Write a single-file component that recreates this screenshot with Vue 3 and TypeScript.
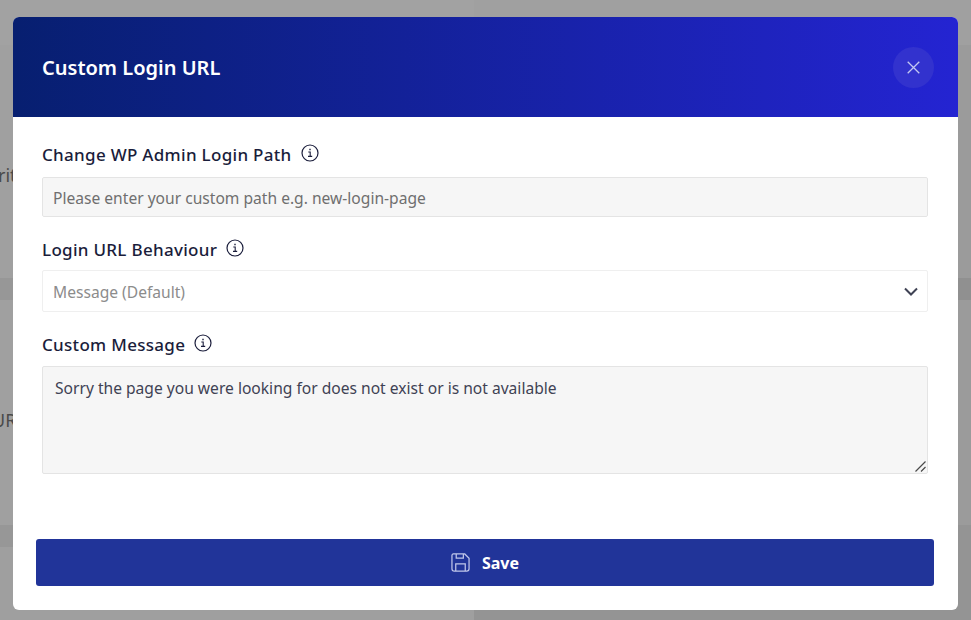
<script setup lang="ts">
const fields = {
  path: 'Change WP Admin Login Path',
  behaviour: 'Login URL Behaviour',
  message: 'Custom Message',
}
</script>

<template>
  <div class="page">
    <div class="backdrop">
      <div class="side side-left">
        <div class="band band-top"></div>
        <div class="band band-card"><span class="peek peek-one">rit</span></div>
        <div class="band band-bar"></div>
        <div class="band band-card-two"><span class="peek peek-two">UR</span></div>
        <div class="band band-bar"></div>
        <div class="band band-rest"></div>
      </div>
      <div class="side side-right">
        <div class="band band-top"></div>
        <div class="band band-card"></div>
        <div class="band band-bar"></div>
        <div class="band band-card-two"></div>
        <div class="band band-rest"></div>
      </div>
    </div>
    <div class="modal">
      <header class="modal-head">
        <h2>Custom Login URL</h2>
        <button class="close" type="button" aria-label="Close">
          <svg width="13" height="13" viewBox="0 0 13 13" fill="none" stroke="currentColor" stroke-width="1.3">
            <path d="M.7.7l11.6 11.6M12.3.7L.7 12.3" />
          </svg>
        </button>
      </header>
      <div class="modal-body">
        <div class="field field-first">
          <label>
            {{ fields.path }}
            <svg class="info" width="18" height="18" viewBox="0 0 18 18" fill="none" stroke="currentColor">
              <circle cx="9" cy="9" r="8" stroke-width="1.2" />
              <path d="M7.3 8h1.9v4.3M7 12.4h4.2" stroke-width="1.1" />
              <path d="M8.3 4.8h1.4v1.5H8.3z" fill="currentColor" stroke="none" />
            </svg>
          </label>
          <input class="control filled" type="text" placeholder="Please enter your custom path e.g. new-login-page" />
        </div>
        <div class="field field-second">
          <label>
            {{ fields.behaviour }}
            <svg class="info" width="18" height="18" viewBox="0 0 18 18" fill="none" stroke="currentColor">
              <circle cx="9" cy="9" r="8" stroke-width="1.2" />
              <path d="M7.3 8h1.9v4.3M7 12.4h4.2" stroke-width="1.1" />
              <path d="M8.3 4.8h1.4v1.5H8.3z" fill="currentColor" stroke="none" />
            </svg>
          </label>
          <div class="control select">
            <span>Message (Default)</span>
            <svg width="14" height="9" viewBox="0 0 14 9" fill="none" stroke="#3f4254" stroke-width="2">
              <path d="M1 1.5l6 6 6-6" />
            </svg>
          </div>
        </div>
        <div class="field">
          <label>
            {{ fields.message }}
            <svg class="info" width="18" height="18" viewBox="0 0 18 18" fill="none" stroke="currentColor">
              <circle cx="9" cy="9" r="8" stroke-width="1.2" />
              <path d="M7.3 8h1.9v4.3M7 12.4h4.2" stroke-width="1.1" />
              <path d="M8.3 4.8h1.4v1.5H8.3z" fill="currentColor" stroke="none" />
            </svg>
          </label>
          <div class="area-wrap">
            <textarea class="control filled area" value="Sorry the page you were looking for does not exist or is not available"></textarea>
            <svg class="grip" width="11" height="11" viewBox="0 0 11 11" fill="none" stroke="#4a4a4a" stroke-width="1.2">
              <path d="M.5 10.5l10-10M6 10.5l4.5-4.5" />
            </svg>
          </div>
        </div>
      </div>
      <footer class="modal-foot">
        <button class="save" type="button">
          <svg width="19" height="19" viewBox="0 0 20 20" fill="none" stroke="#c0c6ea" stroke-width="1.3">
            <path d="M2.5 1h12L19 5.5V16.5a2.5 2.5 0 0 1-2.5 2.5h-13A2.5 2.5 0 0 1 1 16.5v-14A1.5 1.5 0 0 1 2.5 1z" />
            <path d="M5 19v-7.5h10V19M5.5 1v4.5h7.5V1" />
          </svg>
          <span class="save-label">Save</span>
        </button>
      </footer>
    </div>
  </div>
</template>

<style>
body {
  margin: 0;
}
</style>

<style scoped>
.page {
  position: relative;
  width: 971px;
  height: 620px;
  overflow: hidden;
  font-family: "Noto Sans", "Open Sans", sans-serif;
}

.backdrop {
  display: flex;
  height: 100%;
}

.side {
  display: flex;
  flex-direction: column;
}

.side-left {
  width: 474px;
  --top: #a2a2a2;
  --card: #a0a0a0;
  --bar: #979797;
  --rest: #9f9f9f;
}

.side-right {
  flex: 1;
  --top: #a0a0a0;
  --card: #9b9b9b;
  --bar: #909090;
  --rest: #949494;
}

.band {
  overflow: hidden;
  position: relative;
}

.band-top {
  height: 45px;
  background: var(--top);
}

.band-card {
  height: 233px;
  background: var(--card);
}

.band-bar {
  height: 22px;
  background: var(--bar);
}

.band-card-two {
  height: 225px;
  background: var(--card);
}

.band-rest {
  flex: 1;
  background: var(--rest);
}

.peek {
  position: absolute;
  color: #4a4a4a;
  font-size: 18px;
  line-height: 24px;
  white-space: nowrap;
}

.peek-one {
  top: 118px;
  left: -2px;
}

.peek-two {
  top: 108px;
  left: -8px;
}

.modal {
  position: absolute;
  top: 17px;
  left: 13px;
  width: 945px;
  height: 593px;
  display: flex;
  flex-direction: column;
  background: #fff;
  border-radius: 6px;
  overflow: hidden;
}

.modal-head {
  height: 100px;
  flex: none;
  display: flex;
  align-items: center;
  justify-content: space-between;
  padding: 0 24px 0 29px;
  background: linear-gradient(90deg, #071f70, #2424d2);
}

.modal-head h2 {
  margin: 0;
  color: #fff;
  font-size: 20px;
  font-weight: 600;
}

.close {
  width: 41px;
  height: 41px;
  display: flex;
  align-items: center;
  justify-content: center;
  padding: 0;
  border: 0;
  border-radius: 50%;
  background: #3232ce;
  color: #c3c8f2;
}

.modal-body {
  flex: 1;
  padding: 25px 30px 0 29px;
}

.field {
  margin-bottom: 20px;
}

.field label {
  display: flex;
  align-items: center;
  gap: 9px;
  height: 24px;
  margin-bottom: 10px;
  color: #1a1d3b;
  font-size: 17px;
  font-weight: 500;
  letter-spacing: 0.3px;
}

.field-first label {
  margin-bottom: 11px;
}

.field-second label {
  margin-bottom: 9px;
}

.info {
  margin-top: -2px;
}

.control {
  display: block;
  box-sizing: border-box;
  width: 886px;
  border-radius: 2px;
  font-family: inherit;
  font-size: 15.6px;
  outline: none;
}

.filled {
  height: 40px;
  padding: 1px 10px 0;
  border: 1px solid #e4e4e4;
  background: #f6f6f6;
  color: #3f4254;
}

.filled::placeholder {
  color: #6f6f6f;
  opacity: 1;
}

.select {
  height: 42px;
  display: flex;
  align-items: center;
  justify-content: space-between;
  padding: 1px 9px 0 10px;
  border: 1px solid #efefef;
  color: #8c8c8c;
}

.area-wrap {
  position: relative;
  width: 886px;
}

.area {
  height: 108px;
  padding: 8px 12px;
  line-height: 26px;
  color: #3f4254;
  resize: none;
}

.grip {
  position: absolute;
  right: 2px;
  bottom: 2px;
  pointer-events: none;
}

.modal-foot {
  flex: none;
  padding: 0 24px 24px 23px;
}

.save {
  width: 100%;
  height: 47px;
  display: flex;
  align-items: center;
  justify-content: center;
  gap: 11px;
  border: 0;
  border-radius: 3px;
  background: #213499;
  color: #fff;
  font-family: inherit;
  font-size: 16px;
  font-weight: 700;
}

.save-label {
  margin-left: 1px;
}
</style>
